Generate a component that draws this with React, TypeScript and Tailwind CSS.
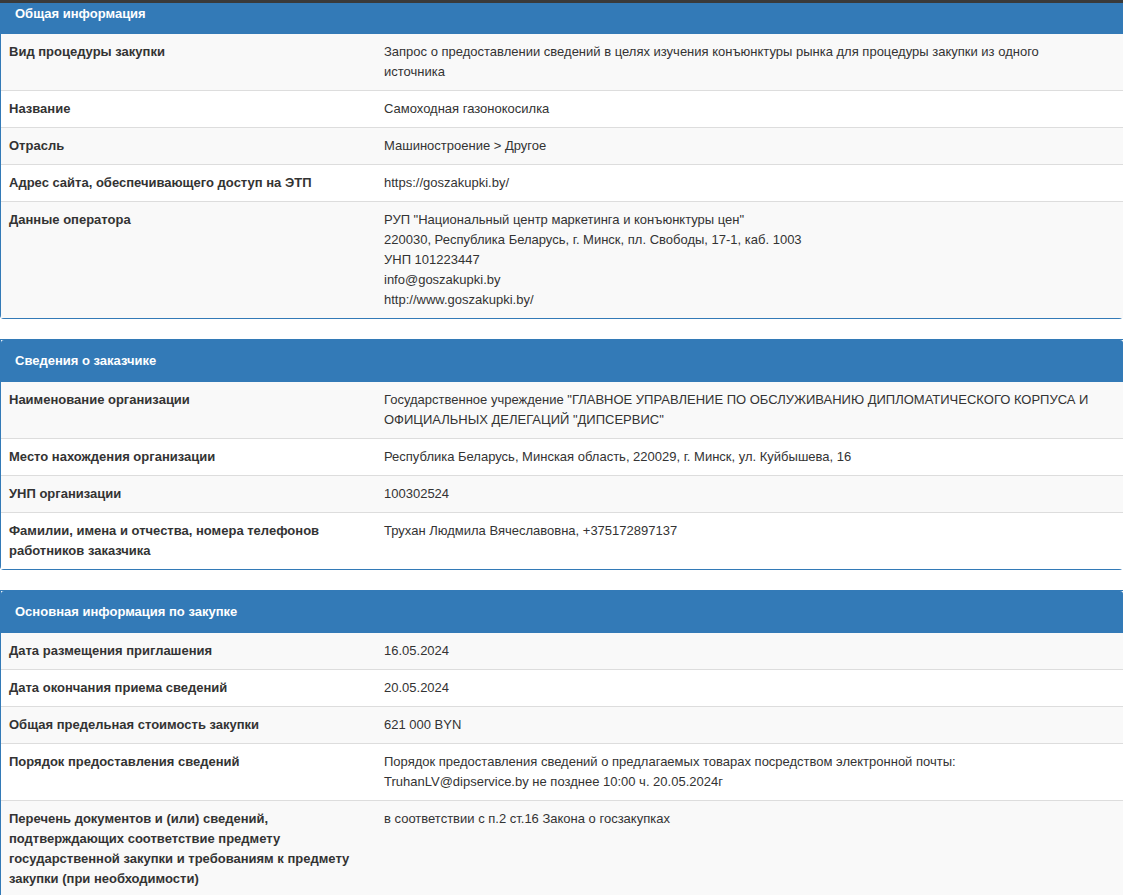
type Row = { label: string; value: React.ReactNode };

function Panel({ title, rows, first }: { title: string; rows: Row[]; first?: boolean }) {
  return (
    <div className="border border-[#337ab7] rounded-b-[4px] border-r-0 mb-[20px] bg-white">
      <div
        className={`bg-[#337ab7] text-white font-bold text-[13px] leading-[20px] px-[14px] ${
          first ? 'pt-0 pb-[10px]' : 'py-[11px] rounded-t-[3px]'
        }`}
      >
        {title}
      </div>
      {rows.map((r, i) => (
        <div
          key={i}
          className={`flex text-[13px] leading-[20px] text-[#333] ${i > 0 ? 'border-t border-[#ddd]' : ''} ${
            i % 2 === 0 ? 'bg-[#f9f9f9]' : 'bg-white'
          }`}
        >
          <div className="w-[375px] shrink-0 px-[8px] pt-[8px] pb-[8px] font-bold">{r.label}</div>
          <div className="flex-1 px-[8px] pt-[8px] pb-[8px] pr-[30px]">{r.value}</div>
        </div>
      ))}
    </div>
  );
}

export default function App() {
  return (
    <div className="w-[1123px] h-[895px] overflow-hidden bg-white" style={{ fontFamily: '"Liberation Sans", Arial, sans-serif' }}>
      <div className="h-[3px] bg-[#3a3a3a]" />
      <Panel
        first
        title="Общая информация"
        rows={[
          {
            label: 'Вид процедуры закупки',
            value: 'Запрос о предоставлении сведений в целях изучения конъюнктуры рынка для процедуры закупки из одного источника',
          },
          { label: 'Название', value: 'Самоходная газонокосилка' },
          { label: 'Отрасль', value: 'Машиностроение > Другое' },
          { label: 'Адрес сайта, обеспечивающего доступ на ЭТП', value: 'https://goszakupki.by/' },
          {
            label: 'Данные оператора',
            value: (
              <>
                РУП "Национальный центр маркетинга и конъюнктуры цен"
                <br />
                220030, Республика Беларусь, г. Минск, пл. Свободы, 17-1, каб. 1003
                <br />
                УНП 101223447
                <br />
                info@goszakupki.by
                <br />
                http://www.goszakupki.by/
              </>
            ),
          },
        ]}
      />
      <Panel
        title="Сведения о заказчике"
        rows={[
          {
            label: 'Наименование организации',
            value:
              'Государственное учреждение "ГЛАВНОЕ УПРАВЛЕНИЕ ПО ОБСЛУЖИВАНИЮ ДИПЛОМАТИЧЕСКОГО КОРПУСА И ОФИЦИАЛЬНЫХ ДЕЛЕГАЦИЙ "ДИПСЕРВИС"',
          },
          {
            label: 'Место нахождения организации',
            value: 'Республика Беларусь, Минская область, 220029, г. Минск, ул. Куйбышева, 16',
          },
          { label: 'УНП организации', value: '100302524' },
          {
            label: 'Фамилии, имена и отчества, номера телефонов работников заказчика',
            value: 'Трухан Людмила Вячеславовна, +375172897137',
          },
        ]}
      />
      <Panel
        title="Основная информация по закупке"
        rows={[
          { label: 'Дата размещения приглашения', value: '16.05.2024' },
          { label: 'Дата окончания приема сведений', value: '20.05.2024' },
          { label: 'Общая предельная стоимость закупки', value: '621 000 BYN' },
          {
            label: 'Порядок предоставления сведений',
            value: (
              <>
                Порядок предоставления сведений о предлагаемых товарах посредством электронной почты:
                <br />
                TruhanLV@dipservice.by не позднее 10:00 ч. 20.05.2024г
              </>
            ),
          },
          {
            label:
              'Перечень документов и (или) сведений, подтверждающих соответствие предмету государственной закупки и требованиям к предмету закупки (при необходимости)',
            value: 'в соответствии с п.2 ст.16 Закона о госзакупках',
          },
        ]}
      />
    </div>
  );
}
